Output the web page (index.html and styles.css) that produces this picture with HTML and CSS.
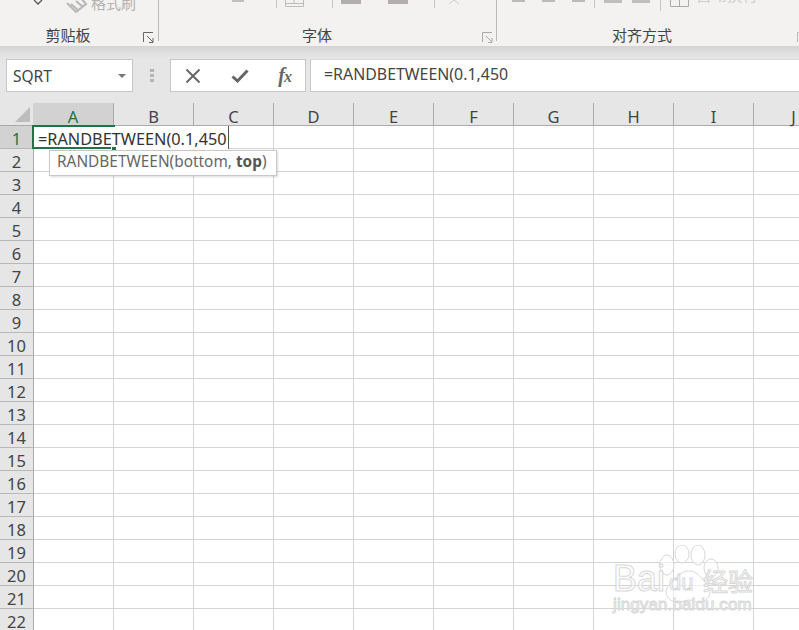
FILE: index.html
```html
<!DOCTYPE html>
<html lang="zh">
<head>
<meta charset="utf-8">
<title>Excel</title>
<link rel="stylesheet" href="styles.css">
</head>
<body>
<div class="app">
  <section class="ribbon">
    <div class="group g1">
      <div class="strip">
        <svg class="chev" width="10" height="6" viewBox="0 0 10 6"><path d="M1 0l4 4 4-4" fill="none" stroke="#555" stroke-width="1.3"/></svg>
        <svg class="brush" width="24" height="14" viewBox="0 0 24 14"><path d="M1 4L10 13 20 5 14-2M5 5l8 7M10 2l7 6" fill="none" stroke="#b9b7b5" stroke-width="2"/></svg>
        <span class="painter">格式刷</span>
      </div>
      <div class="foot"><span class="label">剪贴板</span>
        <svg class="launch" width="11" height="11" viewBox="0 0 11 11"><path d="M.5 10V.5H10M4 4l6 6M10 6v4.500H6" fill="none" stroke="#666"/></svg></div>
    </div>
    <div class="group g2">
      <div class="strip">
        <i class="blk b12"></i><i class="sep s1"></i>
        <svg class="ic1" width="20" height="7" viewBox="0 0 20 7"><path d="M.5 0v6.500h18V0M0 3.500h19M9 0v3" fill="none" stroke="#bbb"/></svg>
        <i class="sep s2"></i><i class="blk b20 a"></i><i class="blk b20 b"></i><i class="sep s3"></i>
        <svg class="ic2" width="12" height="4" viewBox="0 0 12 4"><path d="M1 4l5-4 5 4" fill="none" stroke="#ccc"/></svg>
      </div>
      <div class="foot"><span class="label">字体</span>
        <svg class="launch" width="11" height="11" viewBox="0 0 11 11"><path d="M.5 10V.5H10M4 4l6 6M10 6v4.500H6" fill="none" stroke="#aaa"/></svg></div>
    </div>
    <div class="group g3">
      <div class="strip">
        <i class="blk b13 c"></i><i class="blk b13 d"></i><i class="blk b13 d"></i><i class="sep s4"></i>
        <i class="blk b18 e"></i><i class="blk b18 f"></i><i class="sep s5"></i>
        <svg class="ic3" width="20" height="7" viewBox="0 0 20 7"><path d="M.5 0v6.500h18V0M9.500 0v6" fill="none" stroke="#aaa"/></svg>
        <span class="wrap">自动换行</span>
      </div>
      <div class="foot"><span class="label">对齐方式</span>
        <svg class="launch" width="11" height="11" viewBox="0 0 11 11"><path d="M.5 10V.5H10M4 4l6 6" fill="none" stroke="#bbb"/></svg></div>
    </div>
  </section>

  <section class="fbar">
    <div class="namebox"><span>SQRT</span><i class="caret"></i></div>
    <div class="dots"><i></i><i></i><i></i></div>
    <div class="fbtns">
      <svg width="16" height="14" viewBox="0 0 16 14"><path d="M1.500 .5l13 13M14.500 .5l-13 13" fill="none" stroke="#666" stroke-width="2"/></svg>
      <svg width="18" height="14" viewBox="0 0 18 14"><path d="M1.500 7.500L6.500 12 16.500 1.500" fill="none" stroke="#666" stroke-width="3"/></svg>
      <span class="fx">f<em>x</em></span>
    </div>
    <div class="finput">=RANDBETWEEN(0.1,450</div>
  </section>

  <section class="sheet">
    <div class="colhead">
      <div class="corner"><i></i></div>
      <div class="col on">A</div><div class="col">B</div><div class="col">C</div><div class="col">D</div><div class="col">E</div><div class="col">F</div><div class="col">G</div><div class="col">H</div><div class="col">I</div><div class="col">J</div>
    </div>
    <div class="row"><div class="rh on">1</div><div class="cells"></div></div>
    <div class="row"><div class="rh">2</div><div class="cells"></div></div>
    <div class="row"><div class="rh">3</div><div class="cells"></div></div>
    <div class="row"><div class="rh">4</div><div class="cells"></div></div>
    <div class="row"><div class="rh">5</div><div class="cells"></div></div>
    <div class="row"><div class="rh">6</div><div class="cells"></div></div>
    <div class="row"><div class="rh">7</div><div class="cells"></div></div>
    <div class="row"><div class="rh">8</div><div class="cells"></div></div>
    <div class="row"><div class="rh">9</div><div class="cells"></div></div>
    <div class="row"><div class="rh">10</div><div class="cells"></div></div>
    <div class="row"><div class="rh">11</div><div class="cells"></div></div>
    <div class="row"><div class="rh">12</div><div class="cells"></div></div>
    <div class="row"><div class="rh">13</div><div class="cells"></div></div>
    <div class="row"><div class="rh">14</div><div class="cells"></div></div>
    <div class="row"><div class="rh">15</div><div class="cells"></div></div>
    <div class="row"><div class="rh">16</div><div class="cells"></div></div>
    <div class="row"><div class="rh">17</div><div class="cells"></div></div>
    <div class="row"><div class="rh">18</div><div class="cells"></div></div>
    <div class="row"><div class="rh">19</div><div class="cells"></div></div>
    <div class="row"><div class="rh">20</div><div class="cells"></div></div>
    <div class="row"><div class="rh">21</div><div class="cells"></div></div>
    <div class="row"><div class="rh">22</div><div class="cells"></div></div>

    <div class="editor">=RANDBETWEEN(0.1,450</div>
    <div class="sel"></div>
    <div class="handle"></div>
    <div class="tip">RANDBETWEEN(bottom, <b>top</b>)</div>
    <div class="mark">
      <svg class="paw" width="74" height="62" viewBox="0 0 74 62"><g fill="#fff" fill-opacity=".6" stroke="#d8d8d8"><ellipse cx="10" cy="20" rx="7" ry="10"/><ellipse cx="25" cy="9" rx="7" ry="9"/><ellipse cx="41" cy="10" rx="7" ry="10"/><ellipse cx="54" cy="23" rx="7" ry="9"/><path d="M32 26c9 0 13 8 18 14 6 6 2 17-8 17-5 0-7-2-10-2s-7 2-12 2C10 57 6 46 12 40c8-6 10-14 20-14z"/></g></svg>
      <span class="bai">Bai</span><span class="du">du</span><span class="jy">经验</span>
      <span class="url">jingyan.baidu.com</span>
    </div>
  </section>
</div>
</body>
</html>
```
FILE: styles.css
```css
* { box-sizing: border-box; }
html, body { margin: 0; height: 100%; overflow: hidden; }
body { width: 799px; height: 630px; background: #fff; font-family: "Noto Sans", "Noto Sans CJK SC", sans-serif; color: #444; }
.app { width: 799px; height: 630px; overflow: hidden; display: flex; flex-direction: column; }

/* ribbon */
.ribbon { height: 46px; flex: none; display: flex; background: #f3f2f1; overflow: hidden; }
.group { height: 41px; display: flex; flex-direction: column; border-right: 1px solid #b9b8b7; flex: none; }
.g1 { width: 159px; }
.g2 { width: 338px; }
.g3 { flex: 1; border-right: 0; }
.strip { height: 24px; display: flex; align-items: flex-start; }
.foot { flex: 1; position: relative; display: flex; justify-content: center; }
.label { font-size: 15px; line-height: 20px; color: #444; font-family: "Noto Sans CJK SC", sans-serif; margin-top: 0; position: relative; top: 1px; height: 17px; }
.foot { overflow: visible; }
.g1 .label { margin-right: 22px; }
.g2 .label { margin-right: 21px; }
.g3 .label { margin-right: 12px; }
.launch { position: absolute; right: 3px; top: 8px; }
.g1 .launch { right: 4px; }
.g3 .launch { right: -9px; }
.chev { margin: 0 0 0 33px; }
.brush { margin: -1px 0 0 23px; }
.painter { font-size: 15px; line-height: 15px; margin: -5px 0 0 1px; color: #b5b3b1; font-family: "Noto Sans CJK SC", sans-serif; }
.blk { display: block; background: #b3aeab; flex: none; }
.b12 { width: 12px; height: 2px; margin-left: 73px; background: #c2c0be; }
.b20 { width: 20px; height: 4px; }
.b20.a { margin-left: 8px; }
.b20.b { margin-left: 27px; }
.b13 { width: 13px; height: 2px; background: #bdbbb9; }
.b13.c { margin-left: 15px; }
.b13.d { margin-left: 17px; }
.b18 { width: 18px; height: 3px; background: #c0bebc; }
.b18.e { margin-left: 9px; }
.b18.f { margin-left: 10px; }
.sep { display: block; width: 1px; height: 8px; background: #c6c5c4; flex: none; }
.s1 { margin-left: 32px; }
.s2 { margin-left: 27px; }
.s3 { margin-left: 26px; }
.s4 { margin-left: 9px; }
.s5 { margin-left: 10px; height: 11px; }
.ic1 { margin-left: 8px; }
.ic2 { margin-left: 13px; }
.ic3 { margin-left: 9px; }
.wrap { font-size: 15.500px; line-height: 16px; margin: -14px 0 0 6px; color: #cfcdcb; font-family: "Noto Sans CJK SC", sans-serif; }

/* formula bar */
.fbar { height: 57px; flex: none; display: flex; align-items: flex-start; padding: 13px 0 0 6px; background: linear-gradient(#d3d3d2 0, #e0e0e0 7px, #e6e6e6 13px); }
.namebox { width: 127px; height: 33px; background: #fff; border: 1px solid #c6c6c6; display: flex; align-items: center; justify-content: space-between; padding: 0 6px; font-size: 15.500px; color: #444; }
.caret { border: 4px solid transparent; border-top: 4px solid #777; border-bottom: 0; }
.dots { width: 37px; height: 33px; display: flex; flex-direction: column; align-items: center; justify-content: center; gap: 2px; }
.dots i { width: 4px; height: 3px; background: #b4b4b4; display: block; }
.fbtns { width: 136px; height: 33px; background: #fff; border: 1px solid #c6c6c6; display: flex; align-items: center; justify-content: space-between; padding: 0 14px 0 14px; }
.fx { font-family: "Liberation Serif", serif; font-style: italic; font-weight: bold; font-size: 20px; color: #666; letter-spacing: -1px; }
.fx em { font-size: 16px; }
.finput { flex: 1; height: 33px; margin-left: 4px; background: #fff; border: 1px solid #c6c6c6; border-right: 0; border-top-color: #dcdcdc; padding-left: 13px; font-size: 15.900px; line-height: 29px; color: #444; }

/* sheet */
.sheet { flex: 1; position: relative; overflow: hidden; }
.colhead { height: 23px; display: flex; background: #e6e6e6; border-bottom: 1px solid #ababab; }
.corner { width: 33px; flex: none; position: relative; }
.corner i { position: absolute; right: 3px; bottom: 3px; width: 0; height: 0; border-left: 15px solid transparent; border-bottom: 15px solid #bdbdbd; }
.col { width: 80px; flex: none; text-align: center; border-right: 1px solid #ababab; font-size: 16.500px; line-height: 28px; color: #444; }
.col.on { width: 81px; background: #d2d2d2; color: #217346; }
.row { height: 23px; display: flex; }
.rh { width: 34px; flex: none; background: #e6e6e6; border-right: 1px solid #ababab; border-bottom: 1px solid #b8b8b8; text-align: center; font-size: 16.500px; line-height: 26px; color: #444; }
.rh.on { background: #d2d2d2; color: #217346; }
.cells { flex: 1; border-bottom: 1px solid #d4d4d4; background: repeating-linear-gradient(to right, transparent 0 79px, #d4d4d4 79px 80px); }

.editor { position: absolute; left: 34px; top: 23px; width: 195px; height: 23px; background: #fff; border-right: 1px solid #555; padding-left: 4px; font-size: 16.300px; line-height: 26px; color: #333; white-space: nowrap; overflow: hidden; }
.sel { position: absolute; left: 32px; top: 22px; width: 83px; height: 24px; border: 2px solid #217346; border-right: 0; pointer-events: none; }
.handle { position: absolute; left: 111px; top: 44px; width: 5px; height: 5px; background: #217346; border: 1px solid #fff; border-width: 0 0 0 1px; }
.tip { position: absolute; left: 49px; top: 47px; width: 228px; height: 26px; background: #fff; border: 1px solid #c8c8c8; box-shadow: 1px 1px 2px rgba(0,0,0,.15); padding-left: 7px; font-size: 15.400px; line-height: 21px; color: #666; white-space: nowrap; }
.tip b { color: #555; }

.mark { position: absolute; left: 613px; top: 442px; width: 145px; height: 70px; color: #fff; }
.paw { position: absolute; left: 44px; top: 0; }
.mark span { position: absolute; -webkit-text-stroke: 1px #d8d8d8; color: rgba(255,255,255,.6); font-family: "Liberation Sans", sans-serif; white-space: nowrap; }
.bai { left: 0; top: 16px; font-size: 36px; line-height: 36px; }
.du { left: 56px; top: 26px; font-size: 22px; line-height: 24px; }
.jy { left: 90px; top: 20px; font-size: 25px; line-height: 30px; font-family: "Noto Sans CJK SC", sans-serif !important; }
.url { left: 0; top: 50px; font-size: 17px; line-height: 20px; letter-spacing: .1px; }
```
